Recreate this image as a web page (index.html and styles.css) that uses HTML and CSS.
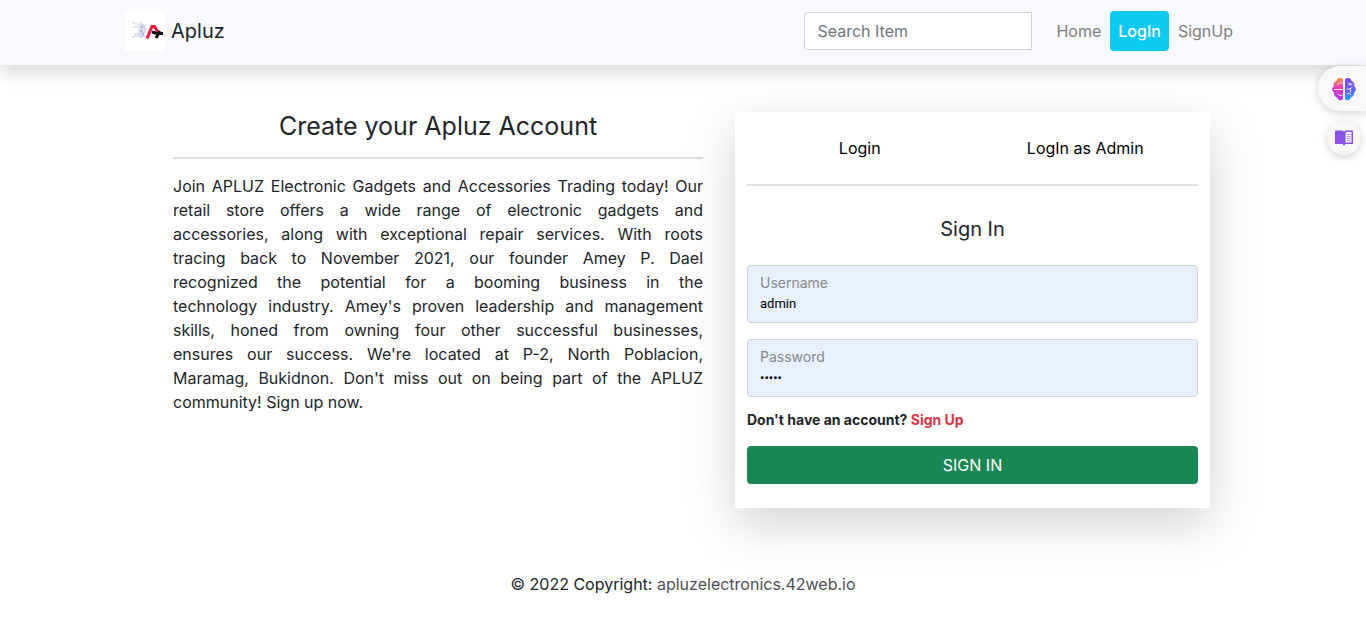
FILE: index.html
```html
<!DOCTYPE html>
<html lang="en">
<head>
<meta charset="utf-8">
<meta name="viewport" content="width=device-width, initial-scale=1">
<title>Apluz - Login</title>
<link rel="stylesheet" href="styles.css">
</head>
<body>
<header class="navbar">
  <div class="container navbar-inner">
    <a class="brand" href="#">
      <svg class="brand-logo" viewBox="0 0 40 40" aria-hidden="true">
        <rect width="40" height="40" fill="#fff"/>
        <path d="M15 12l5 3v10l-5 2-2-3v-9z" fill="#dfe1f0"/>
        <g fill="none" stroke="#c6c9de" stroke-width="1">
          <path d="M7 11l3 2h4M8 16h5M9 23h4M7 27l3-2h4M15 11l3 3 3 1M15 27l3-2 2 1M17 14v11M20 16v6"/>
        </g>
        <path d="M16 16h2M15 20h2M17 23h2" stroke="#8187c2"/>
        <path d="M22 27.500L27 15.500h2.500L34 23" fill="none" stroke="#f5163d" stroke-width="3"/>
        <path d="M27 21l5 1.500h6M35 20l-4 7" fill="none" stroke="#111" stroke-width="3"/>
      </svg>
      <span>Apluz</span>
    </a>
    <form class="search" role="search">
      <input class="search-input" type="search" placeholder="Search Item" aria-label="Search Item">
    </form>
    <nav class="nav">
      <a class="nav-link" href="#">Home</a>
      <a class="nav-link nav-link-active" href="#">LogIn</a>
      <a class="nav-link" href="#">SignUp</a>
    </nav>
  </div>
</header>

<main class="container content">
  <section class="intro">
    <h1 class="intro-title">Create your Apluz Account</h1>
    <hr class="rule">
    <p class="intro-text">
      <span class="line">Join APLUZ Electronic Gadgets and Accessories Trading today! Our</span>
      <span class="line">retail store offers a wide range of electronic gadgets and</span>
      <span class="line">accessories, along with exceptional repair services. With roots</span>
      <span class="line">tracing back to November 2021, our founder Amey P. Dael</span>
      <span class="line">recognized the potential for a booming business in the</span>
      <span class="line">technology industry. Amey's proven leadership and management</span>
      <span class="line">skills, honed from owning four other successful businesses,</span>
      <span class="line">ensures our success. We're located at P-2, North Poblacion,</span>
      <span class="line">Maramag, Bukidnon. Don't miss out on being part of the APLUZ</span>
      <span class="line">community! Sign up now.</span>
    </p>
  </section>

  <section class="card">
    <nav class="tabs">
      <a class="tab" href="#">Login</a>
      <a class="tab" href="#">LogIn as Admin</a>
    </nav>
    <hr class="rule">
    <form class="form">
      <h2 class="form-title">Sign In</h2>
      <div class="field">
        <label class="field-label" for="username">Username</label>
        <input class="field-input" id="username" type="text" value="admin">
      </div>
      <div class="field">
        <label class="field-label" for="password">Password</label>
        <input class="field-input" id="password" type="password" value="admin">
      </div>
      <p class="hint">Don't have an account? <a class="hint-link" href="#">Sign Up</a></p>
      <button class="submit" type="submit">SIGN IN</button>
    </form>
  </section>
</main>

<footer class="footer">© 2022 Copyright: <a class="footer-link" href="#">apluzelectronics.42web.io</a></footer>

<aside class="dock">
  <button class="dock-main" type="button" aria-label="Assistant">
    <svg width="26" height="26" viewBox="0 0 26 26" aria-hidden="true">
      <defs>
        <linearGradient id="left" x1="0" y1="0" x2="0" y2="1">
          <stop offset="0" stop-color="#ff9238"/><stop offset=".45" stop-color="#ee35c0"/><stop offset="1" stop-color="#a03cff"/>
        </linearGradient>
        <linearGradient id="right" x1="0" y1="0" x2="0" y2="1">
          <stop offset="0" stop-color="#8a45e8"/><stop offset=".6" stop-color="#5a62fa"/><stop offset="1" stop-color="#20a5ff"/>
        </linearGradient>
      </defs>
      <path d="M12 3.500C10 1 6 2 5.500 5 3 5.500 2 8 3 10 .5 11.500.5 15 3 16.500 2.500 19 4 21 6 21.500 7 24.500 10.500 25 12 23z" fill="url(#left)"/>
      <path d="M14 3.500C16 1 20 2 20.500 5 23 5.500 24 8 23 10 25.500 11.500 25.500 15 23 16.500 23.500 19 22 21 20 21.500 19 24.500 15.500 25 14 23z" fill="url(#right)"/>
      <g fill="none" stroke="#f7efff" stroke-width="1" stroke-linecap="round">
        <path d="M7 8.500c1-2 2-2 4-1.500M3.500 13.500H11M7 18c1 2 2 2 4 1"/>
        <path d="M17 7.500l2 1.500 2-1M19 9v-2M16 13h3l2-1.500M19 13l1 3M16 18l2-1 2 2"/>
      </g>
    </svg>
  </button>
  <button class="dock-small" type="button" aria-label="Reader">
    <svg width="18" height="18" viewBox="0 0 18 18" aria-hidden="true">
      <path d="M0 1.500h7l2 1 2-1h7V15h-7.500L9 17l-1.500-2H0z" fill="#8b50e8"/>
      <path d="M10.500 4l1.500-1h4.500v10.500H12l-1.500.5z" fill="#f8f3ff"/>
      <path d="M12 5.500h3.500M12 7.500h3.500M12 9.500h3.500M12 11.500h3.500" stroke="#b595ee"/>
    </svg>
  </button>
</aside>
</body>
</html>
```
FILE: styles.css
```css
* {
  box-sizing: border-box;
}

body {
  margin: 0;
  background: #fff;
  color: #212529;
  font-family: Inter, "Open Sans", sans-serif;
  font-size: 16px;
  font-weight: 400;
  line-height: 24px;
}

a {
  color: inherit;
  text-decoration: none;
}

input,
button {
  font: inherit;
}

.container {
  width: 100%;
  max-width: 1140px;
  margin: 0 auto;
}

.navbar {
  padding: 11px 0 14px;
  background: #f8f9fc;
  box-shadow: 0 8px 16px rgba(0, 0, 0, 0.15);
}

.navbar-inner {
  display: flex;
  align-items: center;
  padding: 0 12px;
}

.brand {
  display: flex;
  align-items: center;
  gap: 6px;
  margin-right: auto;
  font-size: 20px;
}

.brand-logo {
  width: 40px;
  height: 40px;
}

.search-input {
  display: block;
  width: 228px;
  height: 38px;
  padding: 6px 12px;
  border: 1px solid #ced4da;
  border-radius: 4px 0 0 4px;
  background: #fff;
  color: #212529;
  appearance: none;
}

.search-input::placeholder {
  color: #6c757d;
  opacity: 1;
}

.nav {
  display: flex;
  gap: 1px;
  margin-left: 16px;
}

.nav-link {
  padding: 8px;
  color: #7f8081;
}

.nav-link-active {
  border-radius: 4px;
  background: #0dcaf0;
  color: #fff;
  font-weight: 500;
}

.content {
  display: grid;
  grid-template-columns: 530fr 475fr;
  gap: 32px;
  align-items: start;
  padding: 47px 43px 0 60px;
}

.rule {
  height: 2px;
  margin: 0;
  border: 0;
  background: #dedfe0;
}

.intro-title {
  margin: 0 0 16px;
  font-size: 25px;
  font-weight: 400;
  line-height: 29px;
  text-align: center;
}

.intro-text {
  margin: 15px 0 0;
}

.line {
  display: block;
  text-align: justify;
  text-align-last: justify;
}

.line:last-child {
  text-align-last: left;
}

.card {
  padding: 12px 12px 24px;
  background: #fff;
  box-shadow: 0 16px 48px rgba(0, 0, 0, 0.175);
}

.tabs {
  display: grid;
  grid-template-columns: 1fr 1fr;
  padding-bottom: 12px;
}

.tab {
  padding: 12px;
  color: #000;
  text-align: center;
}

.form {
  padding-top: 31px;
}

.form-title {
  margin: 0 0 24px;
  font-size: 20px;
  font-weight: 400;
  line-height: 24px;
  text-align: center;
}

.field {
  display: flex;
  flex-direction: column;
  height: 58px;
  margin-bottom: 16px;
  padding: 8px 12px;
  border: 1px solid #ced4da;
  border-radius: 4px;
  background: #e8f0fe;
}

.field-label {
  color: #84898f;
  font-size: 14px;
  line-height: 18px;
}

.field-input {
  width: 100%;
  height: 24px;
  padding: 0;
  border: 0;
  outline: 0;
  background: transparent;
  color: #000;
  font-family: Roboto, sans-serif;
  font-size: 13px;
}

.hint {
  margin: -3px 0 16px;
  font-size: 14px;
  font-weight: 700;
  line-height: 20px;
}

.hint-link {
  color: #dc3545;
}

.submit {
  display: block;
  width: 100%;
  height: 38px;
  padding: 6px 12px;
  border: 0;
  border-radius: 4px;
  background: #198754;
  color: #fff;
}

.footer {
  padding: 64px 16px 38px;
  text-align: center;
}

.footer-link {
  color: #4d5154;
}

.dock {
  position: fixed;
  top: 66px;
  right: 0;
  display: flex;
  flex-direction: column;
  align-items: flex-end;
  gap: 10px;
}

.dock-main,
.dock-small {
  display: flex;
  align-items: center;
  border: 0;
  background: #f8f8f9;
  box-shadow: 0 2px 10px rgba(0, 0, 0, 0.18);
}

.dock-main {
  width: 48px;
  height: 45px;
  padding: 0 0 0 13px;
  border-radius: 24px 0 0 24px;
}

.dock-small {
  justify-content: center;
  width: 34px;
  height: 34px;
  margin-right: 5px;
  padding: 0;
  border-radius: 50%;
}
```
